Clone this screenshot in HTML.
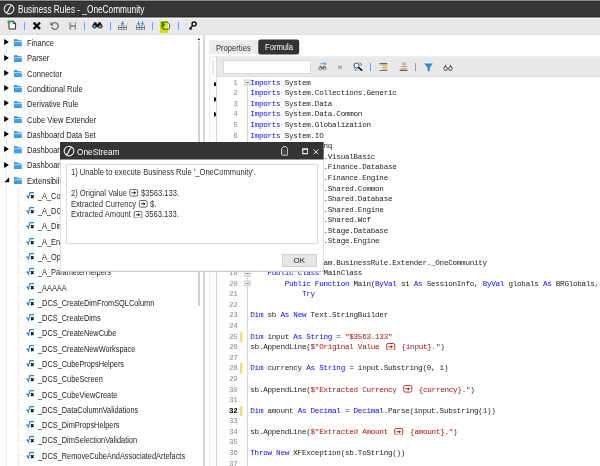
<!DOCTYPE html>
<html><head><meta charset="utf-8"><title>Business Rules</title>
<style>
*{box-sizing:border-box;margin:0;padding:0}
html,body{width:600px;height:466px;overflow:hidden;background:#fff}
body{font-family:"Liberation Sans",sans-serif;position:relative;color:#222}
.abs{position:absolute}
#title{position:absolute;left:0;top:0;width:600px;height:17px}
#title .t{position:absolute;left:17.7px;top:3.9px;font-size:10.2px;transform:scaleX(0.812);transform-origin:0 0;color:#fff;white-space:pre;line-height:12px}
#tb{display:none}
.sep{position:absolute;width:1px;background:#74a2e0;top:22px;height:7.6px}
#tree{position:absolute;left:0;top:35px;width:203px;height:431px;background:#fff;overflow:hidden}
#treein{position:absolute;left:0;top:-35px;width:203px;height:466px}
.tt{position:absolute;font-size:8.8px;transform:scaleX(0.838);transform-origin:0 0;line-height:12px;height:12px;white-space:pre;color:#232323}
.ti{position:absolute;line-height:0}
.fold{width:7.8px;height:7.4px;display:block}
.sq{width:8.4px;height:7.6px;display:block}
.ar{position:absolute;width:6px;height:6px}
.hl{position:absolute;left:18px;width:5px;height:1px;background:#efefef}
.vl{position:absolute;width:1px;background:#ececec}
#thumb{position:absolute;left:197.9px;top:41px;width:2.1px;height:264.5px;background:#d2d2d2}
#b1{position:absolute;left:203px;top:34.6px;width:1.9px;height:432px;background:#dadada}
#b2{position:absolute;left:209px;top:56px;width:1px;height:410px;background:#ececec}
#b3{position:absolute;left:215.6px;top:56px;width:1.9px;height:410px;background:#d8d8d8}
#ptab{position:absolute;left:209px;top:40px;width:48.6px;height:13.6px}
#ptab span{position:absolute;left:6.7px;top:3.1px;font-size:8.8px;transform:scaleX(0.865);transform-origin:0 0;line-height:10px;color:#303030;white-space:pre}
#ftab{position:absolute;left:258.3px;top:39.4px;width:41px;height:14.6px}
#ftab span{position:absolute;left:6.6px;top:2.6px;font-size:8.8px;transform:scaleX(0.865);transform-origin:0 0;line-height:10px;color:#fff;white-space:pre}
#tline{position:absolute;left:209px;top:54.9px;width:391px;height:0.7px;background:#dedede}
#etb{display:none}
#etop{display:none}
#grip{position:absolute;left:212px;top:60px;width:1.5px;height:13.8px;background:#e6e6e6}
#sbox{position:absolute;left:222.5px;top:60.4px;width:88px;height:13.4px;background:#fff;border:0.6px solid #dadada}
#code{position:absolute;left:218px;top:77.1px;width:382px;height:389px;overflow:hidden;background:#fff}
#codein{position:absolute;left:-218px;top:-77.1px;width:600px;height:466px}
.ln{position:absolute;left:218px;width:19.6px;text-align:right;font-family:"Liberation Mono",monospace;font-size:7.6px;letter-spacing:-0.255px;line-height:10.6px;height:10.6px;color:#8a8a8a}
.ln.cur{color:#000;font-weight:bold}
.cl{position:absolute;left:250.3px;font-family:"Liberation Mono",monospace;font-size:7.6px;letter-spacing:-0.255px;line-height:10.6px;height:10.6px;white-space:pre;color:#1e1e1e}
.cl b{font-weight:normal;color:#0a0aff}
.cl i{font-style:normal;color:#a31515}
.ym{position:absolute;left:240.2px;width:2.4px;height:10.4px}
.ol{position:absolute;left:246.6px;width:1px;background:#d6d6d6}
.blk{position:absolute;left:213.6px;width:2.6px;height:4.8px}
/* dialog */
#dlg{position:absolute;left:61px;top:143px;width:262px;height:128px}
#dtitle{position:absolute;left:0;top:0;width:100%;height:17px}
#dtitle .t{position:absolute;left:15.6px;top:2.6px;font-size:9.4px;transform:scaleX(0.887);transform-origin:0 0;color:#fff;line-height:11px;white-space:pre}
#dbox{position:absolute;left:5px;top:21px;width:251.6px;height:80px;border:0.7px solid #dcdcdc;background:#fff}
.dl{position:absolute;left:4.1px;font-size:8.8px;transform:scaleX(0.863);transform-origin:0 0;line-height:10px;height:10px;color:#303030;white-space:pre}
.dl svg{width:11.4px;height:7.6px;vertical-align:-1.1px}
.cl svg{width:13.5px;height:7.6px;vertical-align:-1.3px}
.ob{position:absolute;left:243.9px;width:7px;height:7px;overflow:visible}
#ok{position:absolute;left:220.7px;top:110.6px;width:35px;height:13.6px;background:#e6e6e6;border:0.6px solid #d0d0d0;font-size:8px;line-height:12.4px;text-align:center;color:#222}
.tt,.cl,.ln,.dl,#title .t,#dtitle .t,#ptab span,#ftab span,#ok{filter:blur(0.3px)}
</style></head>
<body>
<svg class="abs" style="left:0;top:0" width="600" height="466" viewBox="0 0 600 466">
<rect x="0" y="0" width="600" height="0.8" fill="#b8b8b8"/>
<rect x="0" y="0.8" width="600" height="16.5" fill="#363636"/>
<rect x="0" y="0.8" width="600" height="0.8" fill="#272727"/>
<rect x="0" y="16.3" width="600" height="1" fill="#272727"/>
<rect x="0" y="18.6" width="600" height="15.5" fill="#e9e9e9"/>
<rect x="0" y="34" width="600" height="0.9" fill="#dcdcdc"/>
<rect x="209" y="40.2" width="48.8" height="13.8" fill="#ebebeb"/>
<rect x="258.2" y="39.5" width="41" height="14.9" rx="2.2" fill="#343434"/>
<rect x="209" y="56.5" width="391" height="0.7" fill="#e0e0e0"/>
<rect x="217" y="57.2" width="383" height="18.7" fill="#e9e9e9"/>
<rect x="217" y="75.8" width="383" height="1" fill="#d8d8d8"/>
</svg>
<div id="title">
 <svg class="abs" style="left:2.5px;top:2.9px;width:12px;height:12px" viewBox="0 0 12 12"><circle cx="6" cy="6" r="4.85" fill="none" stroke="#f2f2f2" stroke-width="1.05"/><path d="M9.2 2.2C4.8 3.4 7.4 8.4 2.8 9.8" fill="none" stroke="#f2f2f2" stroke-width="1.15"/></svg>
 <div class="t">Business Rules - _OneCommunity</div>
</div>
<div id="tb"></div>
<!-- toolbar icons -->
<svg class="abs" style="left:6.6px;top:20.4px;width:10px;height:10px" viewBox="0 0 10 10"><path d="M2 2.2V9h6.6V3.4L6.4 1.2H3.4" fill="#fff" stroke="#111" stroke-width="0.9"/><path d="M6.2 1.2V3.6H8.6" fill="none" stroke="#111" stroke-width="0.8"/><circle cx="2.1" cy="2" r="1.75" fill="#1fb141"/></svg>
<div class="sep" style="left:24px"></div>
<svg class="abs" style="left:33px;top:22.2px;width:7.6px;height:7.6px" viewBox="0 0 8 8"><path d="M1.5 1.5L6.5 6.5M6.5 1.5L1.5 6.5" stroke="#111" stroke-width="2.5" stroke-linecap="square"/></svg>
<svg class="abs" style="left:49.6px;top:21.4px;width:9.6px;height:9.6px" viewBox="0 0 10 10"><path d="M2.4 3A3.5 3.5 0 1 1 1.7 6.3" fill="none" stroke="#6c6c6c" stroke-width="1.35"/><path d="M0.4 0.8V4.6H4.2z" fill="#6c6c6c"/></svg>
<svg class="abs" style="left:68.6px;top:22px;width:7.8px;height:7.8px" viewBox="0 0 8 8"><path d="M0.4 0.4H7.6V7.6H0.4z" fill="#8a8a8a"/><path d="M1.8 0.4H6.2V3.2H1.8z" fill="#dfefff"/><path d="M2.2 5H5.8V7.6H2.2z" fill="#f4f4f4"/></svg>
<div class="sep" style="left:83.9px"></div>
<svg class="abs" style="left:92.4px;top:22px;width:10.8px;height:7px" viewBox="0 0 10.8 7"><path d="M2.2 0.3h1.9l0.9 1.6h0.8l0.9-1.6h1.9l2 3.6a2.3 2.3 0 0 1-4.3 1.3h-1.8a2.3 2.3 0 0 1-4.3-1.3z" fill="#1a1a1a"/><circle cx="2.6" cy="4.5" r="1.25" fill="#5eb0f2"/><circle cx="8.2" cy="4.5" r="1.25" fill="#5eb0f2"/></svg>
<div class="sep" style="left:109.6px"></div>
<svg class="abs" style="left:118.3px;top:20.6px;width:9px;height:9.2px" viewBox="0 0 9 9.2"><path d="M0.2 4.4H8.8V9.2H0.2z" fill="#6a6a6a"/><path d="M1 4.4H2.9V5.9H1zM3.6 4.4H5.4V5.9H3.6zM6.1 4.4H8V5.9H6.1zM1 6.9H2.9V8.4H1zM3.6 6.9H5.4V8.4H3.6zM6.1 6.9H8V8.4H6.1z" fill="#f2f2f2"/><path d="M4.5 0.4V3" stroke="#2a86e0" stroke-width="1.1"/><path d="M2.7 2.2L4.5 4.5 6.3 2.2z" fill="#2a86e0"/></svg>
<svg class="abs" style="left:136.1px;top:20.6px;width:9px;height:9.2px" viewBox="0 0 9 9.2"><path d="M0.2 4.4H8.8V9.2H0.2z" fill="#6a6a6a"/><path d="M1 4.4H2.9V5.9H1zM3.6 4.4H5.4V5.9H3.6zM6.1 4.4H8V5.9H6.1zM1 6.9H2.9V8.4H1zM3.6 6.9H5.4V8.4H3.6zM6.1 6.9H8V8.4H6.1z" fill="#f2f2f2"/><path d="M2.5 0.4V3M6.5 0.4V3" stroke="#2a86e0" stroke-width="1.05"/><path d="M0.9 2.2L2.5 4.5 4.1 2.2zM4.9 2.2L6.5 4.5 8.1 2.2z" fill="#2a86e0"/></svg>
<div class="sep" style="left:152.4px"></div>
<svg class="abs" style="left:161.4px;top:21.4px;width:9.4px;height:8.8px" viewBox="0 0 9.4 8.8"><path d="M2 1.2H6.4L8.6 3.2V7.2Q8.6 8.2 7.6 8.2H2z" fill="#fbfbe8" stroke="#4a4a4a" stroke-width="0.9"/><path d="M0.4 0.2V7.2L4.6 3.7z" fill="#16a028"/></svg>
<div class="abs" style="left:160px;top:20.6px;width:7.6px;height:12.4px;background:#ecee14;mix-blend-mode:multiply"></div>
<div class="sep" style="left:178.2px"></div>
<svg class="abs" style="left:187.8px;top:20.8px;width:9.6px;height:9.6px" viewBox="0 0 9.6 9.6"><circle cx="6.1" cy="3.1" r="2.05" fill="none" stroke="#111" stroke-width="1.45"/><path d="M4.6 4.7L1.3 8.2M2.3 7L3.7 8.4" stroke="#111" stroke-width="1.45" fill="none"/></svg>

<div id="tree"><div id="treein">
<div class="vl" style="left:6px;top:46px;height:420px"></div>
<div class="vl" style="left:18px;top:188px;height:280px"></div>
<svg class="ar" style="top:39.30px;left:3.6px" viewBox="0 0 6 6"><path d="M0.2 0.1L4.9 3 0.2 5.9z" fill="#000"/></svg>
<div class="ti" style="top:39.40px;left:14.1px"><svg class="fold" viewBox="0 0 7.8 7.4"><path d="M0 0.3h3.1l0.8 0.9H7.4V2.6H0z" fill="#2b84d2"/><path d="M0.5 1.9H7.1V3H0.5z" fill="#e4f1fb"/><path d="M0 2.7H7.8V7.3H0z" fill="#3d9ae2"/><path d="M0.5 3.7H7.3V4.3H0.5z" fill="#6fb8ee"/></svg></div>
<div class="tt" style="top:37.10px;left:26.6px;transform:scaleX(0.862)">Finance</div>
<svg class="ar" style="top:54.58px;left:3.6px" viewBox="0 0 6 6"><path d="M0.2 0.1L4.9 3 0.2 5.9z" fill="#000"/></svg>
<div class="ti" style="top:54.68px;left:14.1px"><svg class="fold" viewBox="0 0 7.8 7.4"><path d="M0 0.3h3.1l0.8 0.9H7.4V2.6H0z" fill="#2b84d2"/><path d="M0.5 1.9H7.1V3H0.5z" fill="#e4f1fb"/><path d="M0 2.7H7.8V7.3H0z" fill="#3d9ae2"/><path d="M0.5 3.7H7.3V4.3H0.5z" fill="#6fb8ee"/></svg></div>
<div class="tt" style="top:52.38px;left:26.6px;transform:scaleX(0.862)">Parser</div>
<svg class="ar" style="top:69.86px;left:3.6px" viewBox="0 0 6 6"><path d="M0.2 0.1L4.9 3 0.2 5.9z" fill="#000"/></svg>
<div class="ti" style="top:69.96px;left:14.1px"><svg class="fold" viewBox="0 0 7.8 7.4"><path d="M0 0.3h3.1l0.8 0.9H7.4V2.6H0z" fill="#2b84d2"/><path d="M0.5 1.9H7.1V3H0.5z" fill="#e4f1fb"/><path d="M0 2.7H7.8V7.3H0z" fill="#3d9ae2"/><path d="M0.5 3.7H7.3V4.3H0.5z" fill="#6fb8ee"/></svg></div>
<div class="tt" style="top:67.66px;left:26.6px;transform:scaleX(0.862)">Connector</div>
<svg class="ar" style="top:85.14px;left:3.6px" viewBox="0 0 6 6"><path d="M0.2 0.1L4.9 3 0.2 5.9z" fill="#000"/></svg>
<div class="ti" style="top:85.24px;left:14.1px"><svg class="fold" viewBox="0 0 7.8 7.4"><path d="M0 0.3h3.1l0.8 0.9H7.4V2.6H0z" fill="#2b84d2"/><path d="M0.5 1.9H7.1V3H0.5z" fill="#e4f1fb"/><path d="M0 2.7H7.8V7.3H0z" fill="#3d9ae2"/><path d="M0.5 3.7H7.3V4.3H0.5z" fill="#6fb8ee"/></svg></div>
<div class="tt" style="top:82.94px;left:26.6px;transform:scaleX(0.862)">Conditional Rule</div>
<svg class="ar" style="top:100.42px;left:3.6px" viewBox="0 0 6 6"><path d="M0.2 0.1L4.9 3 0.2 5.9z" fill="#000"/></svg>
<div class="ti" style="top:100.52px;left:14.1px"><svg class="fold" viewBox="0 0 7.8 7.4"><path d="M0 0.3h3.1l0.8 0.9H7.4V2.6H0z" fill="#2b84d2"/><path d="M0.5 1.9H7.1V3H0.5z" fill="#e4f1fb"/><path d="M0 2.7H7.8V7.3H0z" fill="#3d9ae2"/><path d="M0.5 3.7H7.3V4.3H0.5z" fill="#6fb8ee"/></svg></div>
<div class="tt" style="top:98.22px;left:26.6px;transform:scaleX(0.862)">Derivative Rule</div>
<svg class="ar" style="top:115.70px;left:3.6px" viewBox="0 0 6 6"><path d="M0.2 0.1L4.9 3 0.2 5.9z" fill="#000"/></svg>
<div class="ti" style="top:115.80px;left:14.1px"><svg class="fold" viewBox="0 0 7.8 7.4"><path d="M0 0.3h3.1l0.8 0.9H7.4V2.6H0z" fill="#2b84d2"/><path d="M0.5 1.9H7.1V3H0.5z" fill="#e4f1fb"/><path d="M0 2.7H7.8V7.3H0z" fill="#3d9ae2"/><path d="M0.5 3.7H7.3V4.3H0.5z" fill="#6fb8ee"/></svg></div>
<div class="tt" style="top:113.50px;left:26.6px;transform:scaleX(0.862)">Cube View Extender</div>
<svg class="ar" style="top:130.98px;left:3.6px" viewBox="0 0 6 6"><path d="M0.2 0.1L4.9 3 0.2 5.9z" fill="#000"/></svg>
<div class="ti" style="top:131.08px;left:14.1px"><svg class="fold" viewBox="0 0 7.8 7.4"><path d="M0 0.3h3.1l0.8 0.9H7.4V2.6H0z" fill="#2b84d2"/><path d="M0.5 1.9H7.1V3H0.5z" fill="#e4f1fb"/><path d="M0 2.7H7.8V7.3H0z" fill="#3d9ae2"/><path d="M0.5 3.7H7.3V4.3H0.5z" fill="#6fb8ee"/></svg></div>
<div class="tt" style="top:128.78px;left:26.6px;transform:scaleX(0.862)">Dashboard Data Set</div>
<svg class="ar" style="top:146.26px;left:3.6px" viewBox="0 0 6 6"><path d="M0.2 0.1L4.9 3 0.2 5.9z" fill="#000"/></svg>
<div class="ti" style="top:146.36px;left:14.1px"><svg class="fold" viewBox="0 0 7.8 7.4"><path d="M0 0.3h3.1l0.8 0.9H7.4V2.6H0z" fill="#2b84d2"/><path d="M0.5 1.9H7.1V3H0.5z" fill="#e4f1fb"/><path d="M0 2.7H7.8V7.3H0z" fill="#3d9ae2"/><path d="M0.5 3.7H7.3V4.3H0.5z" fill="#6fb8ee"/></svg></div>
<div class="tt" style="top:144.06px;left:26.6px;transform:scaleX(0.862)">Dashboard Extender</div>
<svg class="ar" style="top:161.54px;left:3.6px" viewBox="0 0 6 6"><path d="M0.2 0.1L4.9 3 0.2 5.9z" fill="#000"/></svg>
<div class="ti" style="top:161.64px;left:14.1px"><svg class="fold" viewBox="0 0 7.8 7.4"><path d="M0 0.3h3.1l0.8 0.9H7.4V2.6H0z" fill="#2b84d2"/><path d="M0.5 1.9H7.1V3H0.5z" fill="#e4f1fb"/><path d="M0 2.7H7.8V7.3H0z" fill="#3d9ae2"/><path d="M0.5 3.7H7.3V4.3H0.5z" fill="#6fb8ee"/></svg></div>
<div class="tt" style="top:159.34px;left:26.6px;transform:scaleX(0.862)">Dashboard String Function</div>
<svg class="ar" style="top:177.42px;left:3.9px" viewBox="0 0 6 6"><path d="M5.2 0.2V5.2H0.2z" fill="#111"/></svg>
<div class="ti" style="top:176.92px;left:14.1px"><svg class="fold" viewBox="0 0 7.8 7.4"><path d="M0 0.3h3.1l0.8 0.9H7.4V2.6H0z" fill="#2b84d2"/><path d="M0.5 1.9H7.1V3H0.5z" fill="#e4f1fb"/><path d="M0 2.7H7.8V7.3H0z" fill="#3d9ae2"/><path d="M0.5 3.7H7.3V4.3H0.5z" fill="#6fb8ee"/></svg></div>
<div class="tt" style="top:174.62px;left:26.6px;transform:scaleX(0.862)">Extensibility Rules</div>
<div class="hl" style="top:195.50px"></div>
<div class="ti" style="top:191.80px;left:25.7px"><svg class="sq" viewBox="0 0 9 8"><path d="M0.3 4.4L1.3 4 2.6 6.6 4.2 0.6H8.6" fill="none" stroke="#1f86de" stroke-width="1.15"/><path d="M5.4 3.3L8.1 6.5M8.1 3.3L5.4 6.5" stroke="#000" stroke-width="1.35" fill="none"/></svg></div>
<div class="tt" style="top:189.90px;left:38px">_A_CommonHelpers</div>
<div class="hl" style="top:210.78px"></div>
<div class="ti" style="top:207.08px;left:25.7px"><svg class="sq" viewBox="0 0 9 8"><path d="M0.3 4.4L1.3 4 2.6 6.6 4.2 0.6H8.6" fill="none" stroke="#1f86de" stroke-width="1.15"/><path d="M5.4 3.3L8.1 6.5M8.1 3.3L5.4 6.5" stroke="#000" stroke-width="1.35" fill="none"/></svg></div>
<div class="tt" style="top:205.18px;left:38px">_A_DCS_Helpers</div>
<div class="hl" style="top:226.06px"></div>
<div class="ti" style="top:222.36px;left:25.7px"><svg class="sq" viewBox="0 0 9 8"><path d="M0.3 4.4L1.3 4 2.6 6.6 4.2 0.6H8.6" fill="none" stroke="#1f86de" stroke-width="1.15"/><path d="M5.4 3.3L8.1 6.5M8.1 3.3L5.4 6.5" stroke="#000" stroke-width="1.35" fill="none"/></svg></div>
<div class="tt" style="top:220.46px;left:38px">_A_DimHelpers</div>
<div class="hl" style="top:241.34px"></div>
<div class="ti" style="top:237.64px;left:25.7px"><svg class="sq" viewBox="0 0 9 8"><path d="M0.3 4.4L1.3 4 2.6 6.6 4.2 0.6H8.6" fill="none" stroke="#1f86de" stroke-width="1.15"/><path d="M5.4 3.3L8.1 6.5M8.1 3.3L5.4 6.5" stroke="#000" stroke-width="1.35" fill="none"/></svg></div>
<div class="tt" style="top:235.74px;left:38px">_A_EnumHelpers</div>
<div class="hl" style="top:256.62px"></div>
<div class="ti" style="top:252.92px;left:25.7px"><svg class="sq" viewBox="0 0 9 8"><path d="M0.3 4.4L1.3 4 2.6 6.6 4.2 0.6H8.6" fill="none" stroke="#1f86de" stroke-width="1.15"/><path d="M5.4 3.3L8.1 6.5M8.1 3.3L5.4 6.5" stroke="#000" stroke-width="1.35" fill="none"/></svg></div>
<div class="tt" style="top:251.02px;left:38px">_A_OperationHelpers</div>
<div class="hl" style="top:271.90px"></div>
<div class="ti" style="top:268.20px;left:25.7px"><svg class="sq" viewBox="0 0 9 8"><path d="M0.3 4.4L1.3 4 2.6 6.6 4.2 0.6H8.6" fill="none" stroke="#1f86de" stroke-width="1.15"/><path d="M5.4 3.3L8.1 6.5M8.1 3.3L5.4 6.5" stroke="#000" stroke-width="1.35" fill="none"/></svg></div>
<div class="tt" style="top:266.30px;left:38px">_A_ParameterHelpers</div>
<div class="hl" style="top:287.18px"></div>
<div class="ti" style="top:283.48px;left:25.7px"><svg class="sq" viewBox="0 0 9 8"><path d="M0.3 4.4L1.3 4 2.6 6.6 4.2 0.6H8.6" fill="none" stroke="#1f86de" stroke-width="1.15"/><path d="M5.4 3.3L8.1 6.5M8.1 3.3L5.4 6.5" stroke="#000" stroke-width="1.35" fill="none"/></svg></div>
<div class="tt" style="top:281.58px;left:38px">_AAAAA</div>
<div class="hl" style="top:302.46px"></div>
<div class="ti" style="top:298.76px;left:25.7px"><svg class="sq" viewBox="0 0 9 8"><path d="M0.3 4.4L1.3 4 2.6 6.6 4.2 0.6H8.6" fill="none" stroke="#1f86de" stroke-width="1.15"/><path d="M5.4 3.3L8.1 6.5M8.1 3.3L5.4 6.5" stroke="#000" stroke-width="1.35" fill="none"/></svg></div>
<div class="tt" style="top:296.86px;left:38px">_DCS_CreateDimFromSQLColumn</div>
<div class="hl" style="top:317.74px"></div>
<div class="ti" style="top:314.04px;left:25.7px"><svg class="sq" viewBox="0 0 9 8"><path d="M0.3 4.4L1.3 4 2.6 6.6 4.2 0.6H8.6" fill="none" stroke="#1f86de" stroke-width="1.15"/><path d="M5.4 3.3L8.1 6.5M8.1 3.3L5.4 6.5" stroke="#000" stroke-width="1.35" fill="none"/></svg></div>
<div class="tt" style="top:312.14px;left:38px">_DCS_CreateDims</div>
<div class="hl" style="top:333.02px"></div>
<div class="ti" style="top:329.32px;left:25.7px"><svg class="sq" viewBox="0 0 9 8"><path d="M0.3 4.4L1.3 4 2.6 6.6 4.2 0.6H8.6" fill="none" stroke="#1f86de" stroke-width="1.15"/><path d="M5.4 3.3L8.1 6.5M8.1 3.3L5.4 6.5" stroke="#000" stroke-width="1.35" fill="none"/></svg></div>
<div class="tt" style="top:327.42px;left:38px">_DCS_CreateNewCube</div>
<div class="hl" style="top:348.30px"></div>
<div class="ti" style="top:344.60px;left:25.7px"><svg class="sq" viewBox="0 0 9 8"><path d="M0.3 4.4L1.3 4 2.6 6.6 4.2 0.6H8.6" fill="none" stroke="#1f86de" stroke-width="1.15"/><path d="M5.4 3.3L8.1 6.5M8.1 3.3L5.4 6.5" stroke="#000" stroke-width="1.35" fill="none"/></svg></div>
<div class="tt" style="top:342.70px;left:38px">_DCS_CreateNewWorkspace</div>
<div class="hl" style="top:363.58px"></div>
<div class="ti" style="top:359.88px;left:25.7px"><svg class="sq" viewBox="0 0 9 8"><path d="M0.3 4.4L1.3 4 2.6 6.6 4.2 0.6H8.6" fill="none" stroke="#1f86de" stroke-width="1.15"/><path d="M5.4 3.3L8.1 6.5M8.1 3.3L5.4 6.5" stroke="#000" stroke-width="1.35" fill="none"/></svg></div>
<div class="tt" style="top:357.98px;left:38px">_DCS_CubePropsHelpers</div>
<div class="hl" style="top:378.86px"></div>
<div class="ti" style="top:375.16px;left:25.7px"><svg class="sq" viewBox="0 0 9 8"><path d="M0.3 4.4L1.3 4 2.6 6.6 4.2 0.6H8.6" fill="none" stroke="#1f86de" stroke-width="1.15"/><path d="M5.4 3.3L8.1 6.5M8.1 3.3L5.4 6.5" stroke="#000" stroke-width="1.35" fill="none"/></svg></div>
<div class="tt" style="top:373.26px;left:38px">_DCS_CubeScreen</div>
<div class="hl" style="top:394.14px"></div>
<div class="ti" style="top:390.44px;left:25.7px"><svg class="sq" viewBox="0 0 9 8"><path d="M0.3 4.4L1.3 4 2.6 6.6 4.2 0.6H8.6" fill="none" stroke="#1f86de" stroke-width="1.15"/><path d="M5.4 3.3L8.1 6.5M8.1 3.3L5.4 6.5" stroke="#000" stroke-width="1.35" fill="none"/></svg></div>
<div class="tt" style="top:388.54px;left:38px">_DCS_CubeViewCreate</div>
<div class="hl" style="top:409.42px"></div>
<div class="ti" style="top:405.72px;left:25.7px"><svg class="sq" viewBox="0 0 9 8"><path d="M0.3 4.4L1.3 4 2.6 6.6 4.2 0.6H8.6" fill="none" stroke="#1f86de" stroke-width="1.15"/><path d="M5.4 3.3L8.1 6.5M8.1 3.3L5.4 6.5" stroke="#000" stroke-width="1.35" fill="none"/></svg></div>
<div class="tt" style="top:403.82px;left:38px">_DCS_DataColumnValidations</div>
<div class="hl" style="top:424.70px"></div>
<div class="ti" style="top:421.00px;left:25.7px"><svg class="sq" viewBox="0 0 9 8"><path d="M0.3 4.4L1.3 4 2.6 6.6 4.2 0.6H8.6" fill="none" stroke="#1f86de" stroke-width="1.15"/><path d="M5.4 3.3L8.1 6.5M8.1 3.3L5.4 6.5" stroke="#000" stroke-width="1.35" fill="none"/></svg></div>
<div class="tt" style="top:419.10px;left:38px">_DCS_DimPropsHelpers</div>
<div class="hl" style="top:439.98px"></div>
<div class="ti" style="top:436.28px;left:25.7px"><svg class="sq" viewBox="0 0 9 8"><path d="M0.3 4.4L1.3 4 2.6 6.6 4.2 0.6H8.6" fill="none" stroke="#1f86de" stroke-width="1.15"/><path d="M5.4 3.3L8.1 6.5M8.1 3.3L5.4 6.5" stroke="#000" stroke-width="1.35" fill="none"/></svg></div>
<div class="tt" style="top:434.38px;left:38px">_DCS_DimSelectionValidation</div>
<div class="hl" style="top:455.26px"></div>
<div class="ti" style="top:451.56px;left:25.7px"><svg class="sq" viewBox="0 0 9 8"><path d="M0.3 4.4L1.3 4 2.6 6.6 4.2 0.6H8.6" fill="none" stroke="#1f86de" stroke-width="1.15"/><path d="M5.4 3.3L8.1 6.5M8.1 3.3L5.4 6.5" stroke="#000" stroke-width="1.35" fill="none"/></svg></div>
<div class="tt" style="top:449.66px;left:38px">_DCS_RemoveCubeAndAssociatedArtefacts</div>
</div></div>
<svg class="abs" style="left:196.9px;top:37.7px;width:3.8px;height:2.6px" viewBox="0 0 3.8 2.6"><path d="M0.2 2.5L1.9 0.2 3.6 2.5z" fill="#111"/></svg>
<div id="thumb"></div>
<div id="b1"></div>
<div id="ptab"><span>Properties</span></div>
<div id="ftab"><span>Formula</span></div>

<div id="etb"></div><div id="etop"></div>
<div id="b2"></div><div id="b3"></div>
<div id="grip"></div>
<div id="sbox"></div>
<!-- editor toolbar icons -->
<svg class="abs" style="left:318.2px;top:62.4px;width:9px;height:9px" viewBox="0 0 9 9"><g transform="translate(0.2,3.6) scale(0.8,0.76)"><path d="M2.2 0.3h1.9l0.9 1.6h0.8l0.9-1.6h1.9l2 3.6a2.3 2.3 0 0 1-4.3 1.3h-1.8a2.3 2.3 0 0 1-4.3-1.3z" fill="#7a7a7a"/><circle cx="2.6" cy="4.5" r="1.2" fill="#e6e6e6"/><circle cx="8.2" cy="4.5" r="1.2" fill="#e6e6e6"/></g><path d="M2.6 1.7H8M6.4 0.3L8.2 1.7 6.4 3.1" fill="none" stroke="#3f8fe6" stroke-width="0.85"/></svg>
<svg class="abs" style="left:337.6px;top:64.6px;width:4.4px;height:4.6px" viewBox="0 0 5 5"><path d="M1.6 0.4L1 4.6M3.8 0.4L3.2 4.6M0.3 1.7H4.7M0.2 3.3H4.6" stroke="#999" stroke-width="0.8"/></svg>
<svg class="abs" style="left:352.8px;top:61.6px;width:10.4px;height:9.6px" viewBox="0 0 10.4 9.6"><circle cx="3.5" cy="3.5" r="2.5" fill="#f4f8fc" stroke="#3c3c3c" stroke-width="0.95"/><path d="M5.4 5.4L9.2 8.6" stroke="#111" stroke-width="1.7"/><path d="M6.4 0.8Q8.6 1.4 8.2 3.8" fill="none" stroke="#2a86e0" stroke-width="1"/><path d="M1.2 6.6Q2.2 8.6 4.4 8.2" fill="none" stroke="#2a86e0" stroke-width="1"/></svg>
<div class="sep" style="left:370.2px;top:63.2px;height:7.4px"></div>
<svg class="abs" style="left:379.4px;top:62.6px;width:8.6px;height:8.6px" viewBox="0 0 9 9"><path d="M0.4 0.8H8.6" stroke="#222" stroke-width="0.9"/><path d="M3.4 2.8H8.6M3.4 4.6H8.6M3.4 6.4H8.6" stroke="#e6a545" stroke-width="1"/><path d="M0.4 8.2H8.6" stroke="#222" stroke-width="0.9"/></svg>
<svg class="abs" style="left:398.6px;top:62px;width:9px;height:9.4px" viewBox="0 0 9 10"><circle cx="5.2" cy="2" r="1.4" fill="none" stroke="#4a90e2" stroke-width="0.8"/><path d="M1.6 4.8H8.6M1.6 6.6H8.6" stroke="#e6a545" stroke-width="1"/><path d="M0.4 8.8H8.6" stroke="#222" stroke-width="1"/></svg>
<div class="sep" style="left:414.6px;top:63.2px;height:7.4px"></div>
<svg class="abs" style="left:424.4px;top:62.6px;width:9.2px;height:9px" viewBox="0 0 9 9"><path d="M0.2 0.4H8.8L5.6 4.4V8.6L3.4 7.4V4.4z" fill="#2b86d6"/></svg>
<svg class="abs" style="left:443.2px;top:63.6px;width:10px;height:7px" viewBox="0 0 10 7"><circle cx="2.6" cy="4.6" r="1.8" fill="none" stroke="#333" stroke-width="0.9"/><circle cx="7.4" cy="4.6" r="1.8" fill="none" stroke="#333" stroke-width="0.9"/><path d="M1.6 3L3 0.6M8.4 3L7 0.6" stroke="#333" stroke-width="0.8" fill="none"/></svg>

<div id="code"><div id="codein">
<div class="ol" style="left:246.8px;top:85px;height:178px"></div>
<div class="ol" style="left:246.8px;top:276px;height:190px"></div>
<div class="ln" style="top:77.70px">1</div>
<div class="cl" style="top:77.70px"><b>Imports</b> System</div>
<svg class="ob" style="top:79.20px" viewBox="0 0 7 7"><rect x="0.9" y="1.1" width="5.2" height="4.8" fill="#fff" stroke="#b4b4b4" stroke-width="0.8"/><path d="M2.1 3.5H4.9" stroke="#555" stroke-width="0.8"/></svg>
<div class="ln" style="top:88.28px">2</div>
<div class="cl" style="top:88.28px"><b>Imports</b> System.Collections.Generic</div>
<div class="ln" style="top:98.86px">3</div>
<div class="cl" style="top:98.86px"><b>Imports</b> System.Data</div>
<div class="ln" style="top:109.44px">4</div>
<div class="cl" style="top:109.44px"><b>Imports</b> System.Data.Common</div>
<div class="ln" style="top:120.02px">5</div>
<div class="cl" style="top:120.02px"><b>Imports</b> System.Globalization</div>
<div class="ln" style="top:130.60px">6</div>
<div class="cl" style="top:130.60px"><b>Imports</b> System.IO</div>
<div class="ln" style="top:141.18px">7</div>
<div class="cl" style="top:141.18px"><b>Imports</b> System.Linq</div>
<div class="ln" style="top:151.76px">8</div>
<div class="cl" style="top:151.76px"><b>Imports</b> Microsoft.VisualBasic</div>
<div class="ln" style="top:162.34px">9</div>
<div class="cl" style="top:162.34px"><b>Imports</b> OneStream.Finance.Database</div>
<div class="ln" style="top:172.92px">10</div>
<div class="cl" style="top:172.92px"><b>Imports</b> OneStream.Finance.Engine</div>
<div class="ln" style="top:183.50px">11</div>
<div class="cl" style="top:183.50px"><b>Imports</b> OneStream.Shared.Common</div>
<div class="ln" style="top:194.08px">12</div>
<div class="cl" style="top:194.08px"><b>Imports</b> OneStream.Shared.Database</div>
<div class="ln" style="top:204.66px">13</div>
<div class="cl" style="top:204.66px"><b>Imports</b> OneStream.Shared.Engine</div>
<div class="ln" style="top:215.24px">14</div>
<div class="cl" style="top:215.24px"><b>Imports</b> OneStream.Shared.Wcf</div>
<div class="ln" style="top:225.82px">15</div>
<div class="cl" style="top:225.82px"><b>Imports</b> OneStream.Stage.Database</div>
<div class="ln" style="top:236.40px">16</div>
<div class="cl" style="top:236.40px"><b>Imports</b> OneStream.Stage.Engine</div>
<div class="ln" style="top:246.98px">17</div>
<div class="cl" style="top:246.98px"></div>
<div class="ln" style="top:257.56px">18</div>
<div class="cl" style="top:257.56px"><b>Namespace</b> OneStream.BusinessRule.Extender._OneCommunity</div>
<svg class="ob" style="top:259.06px" viewBox="0 0 7 7"><rect x="0.9" y="1.1" width="5.2" height="4.8" fill="#fff" stroke="#b4b4b4" stroke-width="0.8"/><path d="M2.1 3.5H4.9" stroke="#555" stroke-width="0.8"/></svg>
<div class="ln" style="top:268.14px">19</div>
<div class="cl" style="top:268.14px">    <b>Public Class</b> MainClass</div>
<svg class="ob" style="top:269.64px" viewBox="0 0 7 7"><rect x="0.9" y="1.1" width="5.2" height="4.8" fill="#fff" stroke="#b4b4b4" stroke-width="0.8"/><path d="M2.1 3.5H4.9" stroke="#555" stroke-width="0.8"/></svg>
<div class="ln" style="top:278.72px">20</div>
<div class="cl" style="top:278.72px">        <b>Public Function</b> Main(<b>ByVal</b> si <b>As</b> SessionInfo, <b>ByVal</b> globals <b>As</b> BRGlobals, <b>ByVal</b> api <b>As Object</b></div>
<svg class="ob" style="top:280.22px" viewBox="0 0 7 7"><rect x="0.9" y="1.1" width="5.2" height="4.8" fill="#fff" stroke="#b4b4b4" stroke-width="0.8"/><path d="M2.1 3.5H4.9" stroke="#555" stroke-width="0.8"/></svg>
<div class="ln" style="top:289.30px">21</div>
<div class="cl" style="top:289.30px">            <b>Try</b></div>
<div class="ln" style="top:299.88px">22</div>
<div class="cl" style="top:299.88px"></div>
<div class="ln" style="top:310.46px">23</div>
<div class="cl" style="top:310.46px"><b>Dim</b> sb <b>As New</b> Text.StringBuilder</div>
<div class="ln" style="top:321.04px">24</div>
<div class="cl" style="top:321.04px"></div>
<div class="ln" style="top:331.62px">25</div>
<div class="cl" style="top:331.62px"><b>Dim</b> input <b>As String</b> = <i>"$3563.133"</i></div>
<svg class="ym" style="top:331.62px" viewBox="0 0 2.4 10.4"><rect x="0.2" y="0" width="2" height="10.4" fill="#f4da48"/></svg>
<div class="ln" style="top:342.20px">26</div>
<div class="cl" style="top:342.20px">sb.AppendLine(<i>$"Original Value <svg viewBox="0 0 13.5 7.6"><rect x="2.7" y="0.5" width="8.1" height="6.6" rx="1.5" fill="none" stroke="#a31515" stroke-width="0.85"/><path d="M4.4 3.8H7.7" stroke="#a31515" stroke-width="0.95"/><path d="M6.9 2.2L9.1 3.8 6.9 5.4z" fill="#a31515"/></svg> {input}."</i>)</div>
<div class="ln" style="top:352.78px">27</div>
<div class="cl" style="top:352.78px"></div>
<div class="ln" style="top:363.36px">28</div>
<div class="cl" style="top:363.36px"><b>Dim</b> currency <b>As String</b> = input.Substring(0, 1)</div>
<svg class="ym" style="top:363.36px" viewBox="0 0 2.4 10.4"><rect x="0.2" y="0" width="2" height="10.4" fill="#f4da48"/></svg>
<div class="ln" style="top:373.94px">29</div>
<div class="cl" style="top:373.94px"></div>
<div class="ln" style="top:384.52px">30</div>
<div class="cl" style="top:384.52px">sb.AppendLine(<i>$"Extracted Currency <svg viewBox="0 0 13.5 7.6"><rect x="2.7" y="0.5" width="8.1" height="6.6" rx="1.5" fill="none" stroke="#a31515" stroke-width="0.85"/><path d="M4.4 3.8H7.7" stroke="#a31515" stroke-width="0.95"/><path d="M6.9 2.2L9.1 3.8 6.9 5.4z" fill="#a31515"/></svg> {currency}."</i>)</div>
<div class="ln" style="top:395.10px">31</div>
<div class="cl" style="top:395.10px"></div>
<div class="ln cur" style="top:405.68px">32</div>
<div class="cl" style="top:405.68px"><b>Dim</b> amount <b>As Decimal</b> = <b>Decimal</b>.Parse(input.Substring(1))</div>
<svg class="ym" style="top:405.68px" viewBox="0 0 2.4 10.4"><rect x="0.2" y="0" width="2" height="10.4" fill="#f4da48"/></svg>
<div class="ln" style="top:416.26px">33</div>
<div class="cl" style="top:416.26px"></div>
<div class="ln" style="top:426.84px">34</div>
<div class="cl" style="top:426.84px">sb.AppendLine(<i>$"Extracted Amount <svg viewBox="0 0 13.5 7.6"><rect x="2.7" y="0.5" width="8.1" height="6.6" rx="1.5" fill="none" stroke="#a31515" stroke-width="0.85"/><path d="M4.4 3.8H7.7" stroke="#a31515" stroke-width="0.95"/><path d="M6.9 2.2L9.1 3.8 6.9 5.4z" fill="#a31515"/></svg> {amount}."</i>)</div>
<div class="ln" style="top:437.42px">35</div>
<div class="cl" style="top:437.42px"></div>
<div class="ln" style="top:448.00px">36</div>
<div class="cl" style="top:448.00px"><b>Throw New</b> XFException(sb.ToString())</div>
<div class="ln" style="top:458.58px">37</div>
<div class="cl" style="top:458.58px"></div>
</div></div>
<svg class="blk" style="top:81.7px" viewBox="0 0 2.6 4.8"><path d="M0 0Q2.6 0.6 2.6 2.4Q2.6 4.2 0 4.8z" fill="#000"/></svg>
<svg class="blk" style="top:97.1px" viewBox="0 0 2.6 4.8"><path d="M0 0Q2.6 0.6 2.6 2.4Q2.6 4.2 0 4.8z" fill="#000"/></svg>
<svg class="blk" style="top:112.4px" viewBox="0 0 2.6 4.8"><path d="M0 0Q2.6 0.6 2.6 2.4Q2.6 4.2 0 4.8z" fill="#000"/></svg>

<svg class="abs" style="left:55px;top:138px" width="274" height="138" viewBox="55 138 274 138">
<rect x="60.3" y="142.3" width="263.3" height="129" fill="#fff" stroke="#d2d2d2" stroke-width="0.7"/>
<rect x="60" y="270.8" width="263.9" height="0.8" fill="#c4c4c4"/>
<rect x="60" y="142" width="263.6" height="17.5" fill="#343434"/>
</svg>
<div id="dlg">
 <div id="dtitle">
  <svg class="abs" style="left:1.8px;top:2.4px;width:12px;height:12px" viewBox="0 0 12 12"><circle cx="6" cy="6" r="4.85" fill="none" stroke="#f2f2f2" stroke-width="1.05"/><path d="M8.9 1.9C5.4 3.6 6.8 8.2 3 10" fill="none" stroke="#f2f2f2" stroke-width="1.15"/></svg>
  <div class="t">OneStream</div>
  <svg class="abs" style="left:219.8px;top:3.4px;width:7.4px;height:9.8px" viewBox="0 0 7.4 9.8"><path d="M0.6 2.6V8.4Q0.6 9.2 1.4 9.2H6Q6.8 9.2 6.8 8.4V2.6L4.9 0.6H2.5z" fill="none" stroke="#e4e4e4" stroke-width="1"/><path d="M2.6 3.4V7.6M4.8 3.4V7.6" stroke="#777" stroke-width="0.6"/></svg>
  <svg class="abs" style="left:240.8px;top:5.3px;width:6.4px;height:6.4px" viewBox="0 0 6.4 6.4"><path d="M0.7 0.8H5.7V5.7H0.7z" fill="none" stroke="#ededed" stroke-width="1.15"/><path d="M0.7 1.5H5.7" stroke="#ededed" stroke-width="0.9"/></svg>
  <svg class="abs" style="left:252.4px;top:5.8px;width:5.8px;height:5.8px" viewBox="0 0 6 6"><path d="M0.5 0.5L5.5 5.5M5.5 0.5L0.5 5.5" stroke="#f0f0f0" stroke-width="1"/></svg>
 </div>
 <div id="dbox"><div class="dl" style="top:1.6px">1) Unable to execute Business Rule '_OneCommunity'.</div><div class="dl" style="top:22.6px">2) Original Value <svg viewBox="0 0 11.4 7.6" preserveAspectRatio="none"><rect x="1.1" y="0.5" width="9.2" height="6.6" rx="1.7" ry="1.5" fill="none" stroke="#3a3a3a" stroke-width="0.85"/><path d="M3.1 3.8H6.8" stroke="#222" stroke-width="0.95"/><path d="M6 2.1L8.4 3.8 6 5.5z" fill="#222"/></svg> $3563.133.</div><div class="dl" style="top:33.6px">Extracted Currency <svg viewBox="0 0 11.4 7.6" preserveAspectRatio="none"><rect x="1.1" y="0.5" width="9.2" height="6.6" rx="1.7" ry="1.5" fill="none" stroke="#3a3a3a" stroke-width="0.85"/><path d="M3.1 3.8H6.8" stroke="#222" stroke-width="0.95"/><path d="M6 2.1L8.4 3.8 6 5.5z" fill="#222"/></svg> $.</div><div class="dl" style="top:44px">Extracted Amount <svg viewBox="0 0 11.4 7.6" preserveAspectRatio="none"><rect x="1.1" y="0.5" width="9.2" height="6.6" rx="1.7" ry="1.5" fill="none" stroke="#3a3a3a" stroke-width="0.85"/><path d="M3.1 3.8H6.8" stroke="#222" stroke-width="0.95"/><path d="M6 2.1L8.4 3.8 6 5.5z" fill="#222"/></svg> 3563.133.</div></div>
 <div id="ok">OK</div>
</div>
</body></html>
